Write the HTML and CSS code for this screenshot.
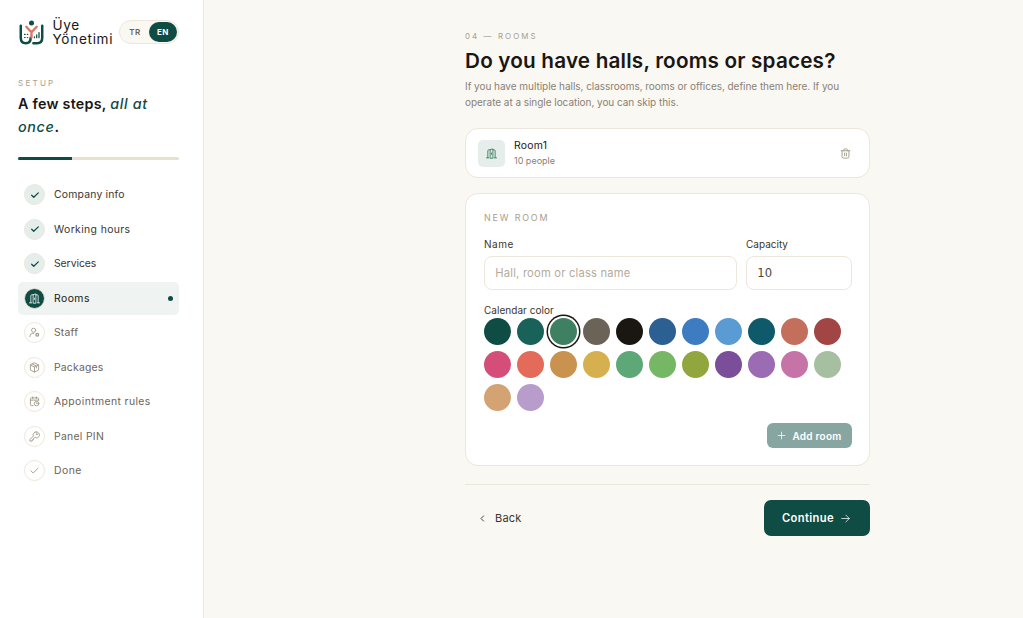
FILE: index.html
```html
<!DOCTYPE html>
<html lang="en">
<head>
<meta charset="utf-8">
<title>Üye Yönetimi – Setup</title>
<link rel="stylesheet" href="styles.css">
</head>
<body>
<svg class="defs" aria-hidden="true">
  <symbol id="check" viewBox="0 0 24 24"><path d="M4 12.500l5 5L20 7"/></symbol>
  <symbol id="door" viewBox="0 0 24 24"><path d="M1 21.500h5M18 21.500h5M4 21V6a2 2 0 0 1 2-2h3M20 21V6a2 2 0 0 0-2-2h-3M9 21.500V3.500l6-1.500v19.500zM12 11v3"/></symbol>
</svg>
<div class="app">
  <aside class="sidebar">
    <header class="brand">
      <svg class="logo" viewBox="0 0 24 24">
        <path d="M1.700 5.500V17c0 3.400 1.700 5.300 4.800 5.300s4.700-1.900 4.700-5.300" stroke="#0f4c43" stroke-width="2.400"/>
        <path d="M22.300 5.500V17c0 3.400-1.900 5.300-5 5.300h-3.500" stroke="#0f4c43" stroke-width="2.400"/>
        <path d="M7 6.500l5 5.300 5-5.300M12 11.800v4.700" stroke="#dd7764" stroke-width="2.300"/>
        <path d="M5.300 13.800h.6M8 13.800h.4M5.300 16.800h.6M8 16.800h.4" stroke="#0f4c43" stroke-width="1.100"/>
        <path d="M14.800 17v-.8M17 17v-2.700M19.200 17v-5" stroke="#0f4c43" stroke-width="1.200"/>
        <circle cx="12" cy="2.800" r="2.400" fill="#0f4c43" stroke="none"/>
      </svg>
      <div class="brand-name"><div>Üye</div><div>Yönetimi</div></div>
      <div class="lang"><span class="tr">TR</span><span class="en">EN</span></div>
    </header>
    <div class="setup">SETUP</div>
    <h2 class="tagline">A few steps, <em>all at</em><br><em>once</em>.</h2>
    <div class="progress"><div class="bar"></div></div>
    <nav class="steps">
      <div class="step done"><span class="dot"><svg><use href="#check"/></svg></span><span>Company info</span></div>
      <div class="step done"><span class="dot"><svg><use href="#check"/></svg></span><span class="hours">Working hours</span></div>
      <div class="step done"><span class="dot"><svg><use href="#check"/></svg></span><span class="services">Services</span></div>
      <div class="step active"><span class="dot"><svg><use href="#door"/></svg></span><span class="rooms">Rooms</span><i class="marker"></i></div>
      <div class="step"><span class="dot"><svg viewBox="0 0 24 24"><circle cx="10" cy="7" r="4.500"/><path d="M2 21v-1.500a6 6 0 0 1 6-5.500h2.500"/><circle cx="18" cy="17" r="3" stroke-width="2.800"/></svg></span><span>Staff</span></div>
      <div class="step"><span class="dot"><svg viewBox="0 0 24 24"><path d="M12 2l9 4.500v11L12 22l-9-4.500v-11zM3 6.500l9 4.500 9-4.500M12 11v11M7.500 4.500l9 4.500v4"/></svg></span><span>Packages</span></div>
      <div class="step"><span class="dot"><svg viewBox="0 0 24 24"><path d="M9 21H5a2 2 0 0 1-2-2V6a2 2 0 0 1 2-2h14a2 2 0 0 1 2 2v3M3 9h18M8 2v4M16 2v4"/><circle cx="16.500" cy="16.500" r="5"/><path d="M16.500 14.500v2h1.500"/></svg></span><span class="rules">Appointment rules</span></div>
      <div class="step"><span class="dot"><svg viewBox="0 0 24 24"><path d="M15.500 2a6.500 6.500 0 0 0-6 9L2 18.500V22h5v-3h3v-3l3-2a6.500 6.500 0 1 0 2.500-12z"/><circle cx="17" cy="7" r="1"/></svg></span><span class="pin">Panel PIN</span></div>
      <div class="step"><span class="dot"><svg><use href="#check"/></svg></span><span class="rooms">Done</span></div>
    </nav>
  </aside>
  <main class="content">
    <div class="eyebrow">04 — ROOMS</div>
    <h1>Do you have halls, rooms or spaces?</h1>
    <p class="lead">If you have multiple halls, classrooms, rooms or offices, define them here. If you<br>operate at a single location, you can skip this.</p>
    <section class="room">
      <span class="room-icon"><svg><use href="#door"/></svg></span>
      <div class="room-text"><div class="room-name">Room1</div><div class="room-cap">10 people</div></div>
      <svg class="trash" viewBox="0 0 24 24"><path d="M2.500 6h19M8 6V4a2 2 0 0 1 2-2h4a2 2 0 0 1 2 2v2M4.500 6v13a3 3 0 0 0 3 3h9a3 3 0 0 0 3-3V6M10 11v6M14 11v6"/></svg>
    </section>
    <section class="form">
      <div class="form-title">NEW ROOM</div>
      <div class="fields">
        <div class="field"><label class="name-label">Name</label><div class="input placeholder">Hall, room or class name</div></div>
        <div class="field"><label>Capacity</label><div class="input number">10</div></div>
      </div>
      <div class="color-label">Calendar color</div>
      <div class="swatches">
        <i style="background:#0f4c43"></i><i style="background:#19625a"></i><i class="selected" style="background:#3f7f62"></i><i style="background:#6b6357"></i><i style="background:#1a1612"></i><i style="background:#2c5f92"></i><i style="background:#3d7cc1"></i><i style="background:#5b9bd3"></i><i style="background:#0f5a6a"></i><i style="background:#c46f5b"></i><i style="background:#a24545"></i>
        <i style="background:#d54e7a"></i><i style="background:#e46b5a"></i><i style="background:#c9924e"></i><i style="background:#d6b04e"></i><i style="background:#5ea878"></i><i style="background:#75b765"></i><i style="background:#91a63d"></i><i style="background:#7a4e98"></i><i style="background:#9b6bb4"></i><i style="background:#c674a8"></i><i style="background:#a5bfa0"></i>
        <i style="background:#d4a373"></i><i style="background:#b89ccb"></i>
      </div>
      <div class="add"><svg viewBox="0 0 24 24"><path d="M12 3v18M3 12h18"/></svg><span>Add room</span></div>
    </section>
    <footer class="actions">
      <div class="back"><svg viewBox="0 0 24 24"><path d="M15 5l-7 7 7 7"/></svg><span>Back</span></div>
      <div class="continue"><span>Continue</span><svg viewBox="0 0 24 24"><path d="M2 12h20M13 3l9 9-9 9"/></svg></div>
    </footer>
  </main>
</div>
</body>
</html>
```
FILE: styles.css
```css
* { box-sizing: border-box; }
body { margin: 0; background: #faf8f3; font-family: Inter, "Open Sans", sans-serif; color: #1a1612; }
svg { fill: none; stroke: currentColor; stroke-width: 2; stroke-linecap: round; stroke-linejoin: round; flex: none; }
span, label, h1, h2, p, .input { white-space: nowrap; }
.defs { position: absolute; width: 0; height: 0; }
.app { display: flex; height: 618px; overflow: hidden; }
.sidebar { width: 204px; flex: none; background: #fff; border-right: 1px solid #ece7da; padding: 18px 24px 0 18px; }
.brand { display: flex; align-items: center; height: 28px; }
.logo { width: 25px; height: 25px; margin-left: 1px; overflow: visible; }
.brand-name { font-size: 13.600px; line-height: 14.500px; width: 66px; margin-left: 8.500px; letter-spacing: .68px; }
.lang { width: 60px; height: 24px; flex: none; border: 1px solid #ede8dc; border-radius: 12px; background: #faf8f3; display: flex; align-items: center; justify-content: flex-end; padding-right: 1px; font-size: 8px; font-weight: 600; letter-spacing: .6px; color: #6b6357; margin-left: .5px; }
.tr { width: 28px; text-align: center; }
.en { width: 28px; height: 20px; line-height: 20px; border-radius: 10px; background: #0f4c43; color: #fff; text-align: center; font-weight: 700; }
.setup { margin-top: 32px; font-size: 8.100px; line-height: 10px; letter-spacing: 2.200px; color: #aaa292; }
.tagline { margin: 4px 0 0; font-size: 14.300px; line-height: 23px; font-weight: 600; letter-spacing: .25px; }
.tagline em { color: #0f4c43; font-weight: 500; letter-spacing: .65px; }
.progress { height: 3px; margin-top: 18.500px; background: #e8e1d2; border-radius: 2px; overflow: hidden; }
.bar { width: 54px; height: 3px; background: #0f4c43; }
.steps { display: flex; flex-direction: column; gap: 1.500px; margin-top: 18.500px; }
.step { height: 33px; display: flex; align-items: center; padding: 0 6px; border-radius: 5px; font-size: 10.400px; letter-spacing: .2px; color: #6b6357; }
.step > span:nth-child(2) { margin-left: 9px; }
.step .hours { letter-spacing: .37px; }
.step .services { letter-spacing: -.05px; }
.step .rooms { letter-spacing: .45px; }
.step .rules { letter-spacing: .4px; }
.step .pin { letter-spacing: .3px; }
.dot { width: 21px; height: 21px; border: 1px solid #ece7da; border-radius: 50%; display: flex; align-items: center; justify-content: center; color: #a39a89; }
.dot svg { width: 11px; height: 11px; }
.done { color: #3b352d; }
.done .dot { background: #e6eeec; color: #0f4c43; }
.done svg { width: 10px; height: 10px; stroke-width: 3; }
.active { background: #eff4f2; color: #1a1612; }
.active .dot { background: #0f4c43; color: #fff; }
.active svg { stroke-width: 1.700; }
.marker { width: 5px; height: 5px; border-radius: 50%; background: #0f4c43; margin-left: auto; }
.content { width: 405px; margin-left: 261px; padding-top: 31px; }
.eyebrow { font-size: 7.900px; line-height: 10px; letter-spacing: 2.100px; color: #a79e8d; }
h1 { margin: 6px 0 0; font-size: 20.700px; line-height: 28px; font-weight: 600; letter-spacing: .19px; }
.lead { margin: 3px 0 0; font-size: 10px; line-height: 16px; letter-spacing: -.04px; color: #8a8173; }
.room { margin-top: 18px; height: 50px; background: #fff; border: 1px solid #ece7da; border-radius: 13px; display: flex; align-items: center; padding: 0 18.500px 0 12px; }
.room-icon { width: 27px; height: 27px; border-radius: 5px; background: #e5eeea; color: #3f7f62; display: flex; align-items: center; justify-content: center; }
.room-icon svg { width: 11px; height: 11px; }
.room-text { margin-left: 9px; line-height: 15px; }
.room-name { font-size: 10.400px; letter-spacing: .25px; }
.room-cap { font-size: 9px; color: #8a8173; }
.trash { width: 11px; height: 11px; margin-left: auto; color: #a39a89; }
.form { margin-top: 15px; height: 273px; background: #fff; border: 1px solid #ece7da; border-radius: 13px; padding: 18px 17.500px 0 18px; }
.form-title { font-size: 8.900px; line-height: 12px; letter-spacing: 1.850px; color: #a79e8d; }
.fields { display: grid; grid-template-columns: 253px 106px; gap: 9px; margin-top: 13px; }
label { display: block; font-size: 10px; line-height: 14px; color: #3b352d; }
.name-label { letter-spacing: .5px; }
.input { height: 34px; margin-top: 5px; border: 1px solid #ece7da; border-radius: 8px; padding: 0 10.300px; line-height: 32px; font-size: 11.200px; }
.placeholder { color: #b5ab9a; letter-spacing: .2px; }
.number { font-family: "DejaVu Sans", sans-serif; color: #4b453d; font-size: 11.600px; }
.color-label { font-size: 10px; line-height: 14px; margin-top: 13px; letter-spacing: .03px; color: #3b352d; }
.swatches { display: flex; flex-wrap: wrap; gap: 6px; margin: 1.300px 0 0 -.5px; }
.swatches i { width: 27px; height: 27px; border-radius: 50%; }
.swatches .selected { box-shadow: 0 0 0 2px #fff, 0 0 0 3.500px #1a1612; }
.add { width: 85px; height: 24.500px; margin: 12px 0 0 auto; border-radius: 6px; background: #87a5a1; color: #fff; display: flex; align-items: center; padding-left: 10px; font-size: 10px; font-weight: 600; letter-spacing: .25px; }
.add svg { width: 9px; height: 9px; margin-right: 7px; }
.actions { margin-top: 18px; border-top: 1px solid #ece7da; padding-top: 15px; display: flex; justify-content: space-between; align-items: center; }
.back { display: flex; align-items: center; padding-left: 13px; font-size: 11px; letter-spacing: .2px; color: #3b352d; }
.back svg { width: 9px; height: 9px; margin-right: 8px; stroke-width: 2.500; }
.continue { width: 106px; height: 36px; border-radius: 7px; background: #0f4c43; color: #fff; display: flex; align-items: center; padding-left: 18px; font-size: 11.200px; font-weight: 600; letter-spacing: .35px; }
.continue svg { width: 9px; height: 9px; margin-left: 7px; }
```
